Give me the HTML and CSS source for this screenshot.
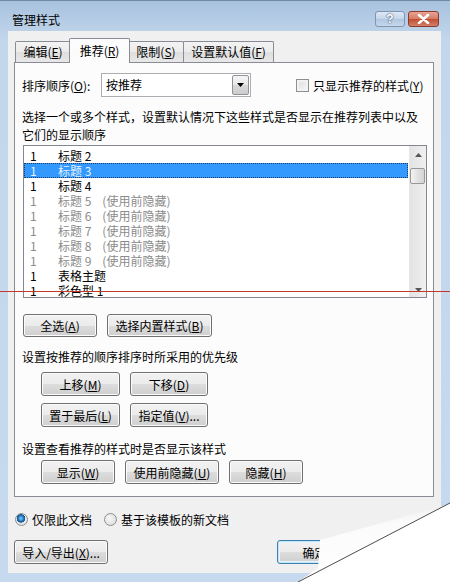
FILE: index.html
```html
<!DOCTYPE html>
<html lang="zh-CN">
<head>
  <meta charset="UTF-8" />
  <title>管理样式</title>
  <link rel="stylesheet" href="styles.css">
</head>
<body>
  <div class="window">
    <div class="titlebar">
      <span class="title">管理样式</span>
      <div class="caption-btn help">?</div>
      <div class="caption-btn close">
        <svg width="13" height="10" viewBox="0 0 13 10">
          <path d="M2 1 L11 9 M11 1 L2 9" stroke="#fff" stroke-width="2.6" stroke-linecap="round" />
        </svg>
      </div>
    </div>

    <div class="client">
      <div class="tabs">
        <div class="tab t1">编辑(<u>E</u>)</div>
        <div class="tab active">推荐(<u>R</u>)</div>
        <div class="tab t3">限制(<u>S</u>)</div>
        <div class="tab t4">设置默认值(<u>F</u>)</div>
      </div>

      <div class="panel">
        <div class="sort-row">
          <span class="sort-label">排序顺序(<u>O</u>):</span>
          <div class="combo">
            <span class="combo-text">按推荐</span>
            <span class="combo-btn">
              <svg width="7" height="4" viewBox="0 0 7 4"><path d="M0 0 H7 L3.5 4 Z" fill="#000" /></svg>
            </span>
          </div>
          <span class="checkbox"></span>
          <span class="check-label">只显示推荐的样式(<u>Y</u>)</span>
        </div>

        <p class="hint">选择一个或多个样式，设置默认情况下这些样式是否显示在推荐列表中以及<br>它们的显示顺序</p>

        <div class="listbox">
          <div class="rows">
            <div class="row"><span class="num">1</span>标题 2</div>
            <div class="row selected"><span class="num">1</span>标题 3</div>
            <div class="row"><span class="num">1</span>标题 4</div>
            <div class="row hidden"><span class="num">1</span>标题 5<span class="note">(使用前隐藏)</span></div>
            <div class="row hidden"><span class="num">1</span>标题 6<span class="note">(使用前隐藏)</span></div>
            <div class="row hidden"><span class="num">1</span>标题 7<span class="note">(使用前隐藏)</span></div>
            <div class="row hidden"><span class="num">1</span>标题 8<span class="note">(使用前隐藏)</span></div>
            <div class="row hidden"><span class="num">1</span>标题 9<span class="note">(使用前隐藏)</span></div>
            <div class="row"><span class="num">1</span>表格主题</div>
            <div class="row"><span class="num">1</span>彩色型 1</div>
          </div>
          <div class="scrollbar">
            <svg class="arrow" width="7" height="4" viewBox="0 0 7 4"><path d="M0 4 H7 L3.5 0 Z" fill="#555" /></svg>
            <div class="thumb"></div>
            <svg class="arrow down" width="7" height="4" viewBox="0 0 7 4"><path d="M0 0 H7 L3.5 4 Z" fill="#555" /></svg>
          </div>
        </div>

        <div class="btn-row first">
          <button class="btn w74">全选(<u>A</u>)</button>
          <button class="btn w105">选择内置样式(<u>B</u>)</button>
        </div>

        <p class="section">设置按推荐的顺序排序时所采用的优先级</p>
        <div class="btn-grid">
          <button class="btn tall w79">上移(<u>M</u>)</button>
          <button class="btn tall w78">下移(<u>D</u>)</button>
          <button class="btn tall w79">置于最后(<u>L</u>)</button>
          <button class="btn tall w78">指定值(<u>V</u>)...</button>
        </div>

        <p class="section second">设置查看推荐的样式时是否显示该样式</p>
        <div class="btn-row indent">
          <button class="btn tall w74">显示(<u>W</u>)</button>
          <button class="btn tall w94">使用前隐藏(<u>U</u>)</button>
          <button class="btn tall w74">隐藏(<u>H</u>)</button>
        </div>
      </div>

      <div class="radio-row">
        <span class="radio checked"></span>
        <span class="radio-label">仅限此文档</span>
        <span class="radio"></span>
        <span class="radio-label">基于该模板的新文档</span>
      </div>

      <div class="footer">
        <button class="btn tall w94">导入/导出(<u>X</u>)...</button>
        <button class="btn tall w75 default ok">确定</button>
        <button class="btn tall w75">取消</button>
      </div>
    </div>

    <div class="redline"></div>

    <svg class="curl" width="160" height="92" viewBox="0 0 160 92">
      <defs>
        <linearGradient id="flap" x1="0" y1="0" x2="0.15" y2="1">
          <stop offset="0" stop-color="#e6e6e6" />
          <stop offset="0.35" stop-color="#fbfbfb" />
          <stop offset="1" stop-color="#ffffff" />
        </linearGradient>
      </defs>
      <path d="M160 13 L160 92 L8 92 Z" fill="#fff" />
      <path d="M156 15 L30 50 L28 78 L8 92 L160 13 Z" fill="url(#flap)" />
      <path d="M8 92 L160 13" stroke="#4d4d4d" stroke-width="1" />
    </svg>
  </div>
</body>
</html>
```

FILE: styles.css
```css
* {
  box-sizing: border-box;
}

body {
  margin: 0;
  background: #fff;
  font-family: "Noto Sans CJK SC", "Liberation Sans", sans-serif;
  font-size: 12px;
  color: #000;
}

u {
  text-decoration: underline;
  text-underline-offset: 1px;
}

.window {
  position: relative;
  width: 450px;
  height: 582px;
  overflow: hidden;
  background: linear-gradient(#a8c2de, #c3d7ec 40px, #c6d9ee);
  border-top: 1px solid #6f8aa8;
}

.titlebar {
  display: flex;
  align-items: flex-start;
  height: 30px;
  padding: 10px 11px 0 12px;
}

.title {
  margin-top: 1px;
  line-height: 16px;
  font-size: 12px;
}

.caption-btn {
  display: flex;
  align-items: center;
  justify-content: center;
  height: 16px;
  border-radius: 3px;
}

.help {
  width: 30px;
  margin-left: auto;
  margin-right: 3px;
  border: 1px solid #7d94b2;
  background: linear-gradient(#dfe9f5, #c4d5ea 50%, #afc5e0 50%, #c7d8ec);
  color: #fff;
  font-weight: bold;
  font-size: 12px;
  font-family: "Liberation Sans", sans-serif;
  text-shadow: 0 0 2px #3b5573, 0 0 1px #3b5573;
}

.close {
  width: 31px;
  border: 1px solid #8c3a2e;
  background: linear-gradient(#e8a493, #d47a64 50%, #c24a30 50%, #d2806a);
}

.client {
  height: 542px;
  margin: 0 9px 0 8px;
  background: #f0f0f0;
  padding-top: 7px;
}

.tabs {
  display: flex;
  align-items: flex-end;
  height: 24px;
  padding-left: 7px;
}

.tab {
  height: 21px;
  margin-left: -1px;
  padding: 0;
  line-height: 20px;
  text-align: center;
  white-space: nowrap;
  border: 1px solid #898c95;
  border-bottom: none;
  background: linear-gradient(#f3f3f3, #ebebeb 50%, #dedede 50%, #e8e8e8);
  border-radius: 2px 2px 0 0;
}

.t1 {
  margin-left: 0;
  width: 56px;
}

.t3 {
  width: 56px;
}

.t4 {
  width: 91px;
}

.tab.active {
  position: relative;
  z-index: 1;
  height: 25px;
  width: 61px;
  margin-left: -2px;
  margin-right: -1px;
  margin-bottom: -1px;
  padding-top: 1px;
  background: #fcfcfc;
  line-height: 22px;
}

.panel {
  width: 420px;
  height: 435px;
  margin-left: 6px;
  padding-left: 7px;
  border: 1px solid #898c95;
  background: #fcfcfc;
}

.sort-row {
  display: flex;
  align-items: center;
  height: 24px;
  margin-top: 10px;
}

.sort-label {
  width: 79px;
}

.combo {
  display: flex;
  width: 150px;
  height: 24px;
  border: 1px solid #abadb3;
  background: #fff;
}

.combo-text {
  flex: 1;
  padding-left: 4px;
  line-height: 22px;
}

.combo-btn {
  display: flex;
  align-items: center;
  justify-content: center;
  width: 17px;
  margin: 1px;
  border: 1px solid #8f9296;
  border-radius: 2px;
  background: linear-gradient(#f4f4f4, #e9e9e9 50%, #d9d9d9 50%, #cdcdcd);
}

.checkbox {
  width: 13px;
  height: 13px;
  margin-left: 45px;
  border: 1px solid #8e8f8f;
  background: linear-gradient(135deg, #dcdcdc, #f8f8f8);
  box-shadow: inset 0 0 0 2px #f2f2f2;
}

.check-label {
  margin-left: 4px;
}

.hint {
  margin: 11px 0 0;
  line-height: 18px;
}

.listbox {
  display: flex;
  width: 404px;
  height: 153px;
  margin: 1px 0 0 1px;
  border: 1px solid #828790;
  background: #fff;
  overflow: hidden;
}

.rows {
  width: 384px;
  padding-top: 2px;
}

.row {
  height: 15px;
  line-height: 15px;
  white-space: nowrap;
}

.num {
  display: inline-block;
  width: 34px;
  padding-left: 6px;
}

.note {
  margin-left: 11px;
}

.row.hidden {
  color: #8b8b8b;
}

.row.selected {
  background: #3399ff;
  color: #e6f1fd;
  outline: 1px dotted #1d3c66;
  outline-offset: -1px;
}

.scrollbar {
  position: relative;
  width: 17px;
  margin-left: 1px;
  background: linear-gradient(90deg, #e3e3e3, #f0f0f0);
  border-left: 1px solid #e6e6e6;
}

.arrow {
  display: block;
  margin: 7px auto 0;
}

.arrow.down {
  position: absolute;
  left: 5px;
  bottom: 5px;
  margin: 0;
}

.thumb {
  width: 15px;
  height: 16px;
  margin: 11px 0 0 0;
  border: 1px solid #979797;
  border-radius: 2px;
  background: linear-gradient(90deg, #f3f3f3, #e2e2e2 50%, #d4d4d4);
}

.btn {
  display: inline-flex;
  align-items: center;
  justify-content: center;
  height: 23px;
  padding: 0;
  border: 1px solid #707070;
  border-radius: 3px;
  background: linear-gradient(#f2f2f2, #ebebeb 50%, #dddddd 50%, #cfcfcf);
  box-shadow: inset 0 0 0 1px #fbfbfb;
  font: inherit;
  color: #000;
}

.btn.tall {
  height: 24px;
}

.w74 { width: 74px; }
.w75 { width: 75px; }
.w78 { width: 78px; }
.w79 { width: 79px; }
.w94 { width: 94px; }
.w105 { width: 105px; }

.btn-row {
  display: flex;
  gap: 10px;
}

.btn-row.first {
  margin: 16px 0 0 1px;
}

.btn-row.indent {
  margin: 2px 0 0 19px;
}

.section {
  margin: 11px 0 0;
  line-height: 18px;
}

.section.second {
  margin-top: 13px;
}

.btn-grid {
  display: grid;
  grid-template-columns: 79px 78px;
  gap: 7px 10px;
  margin: 6px 0 0 19px;
}

.radio-row {
  display: flex;
  align-items: center;
  height: 16px;
  margin: 14px 0 0 7px;
}

.radio {
  width: 13px;
  height: 13px;
  border-radius: 50%;
  border: 1px solid #8e8f8f;
  background: radial-gradient(circle at 40% 40%, #f6f6f6, #d8d8d8);
}

.radio.checked {
  background: radial-gradient(circle at 45% 40%, #7fd0ff 0, #1f70b5 3px, #144f8a 4px, #eaeaea 4.5px, #dcdcdc 100%);
}

.radio-label {
  margin: 0 12px 0 4px;
}

.footer {
  display: flex;
  margin: 13px 0 0 6px;
}

.ok {
  margin-left: 169px;
  margin-right: 10px;
}

.btn.default {
  border-color: #3c7fb1;
  box-shadow: inset 0 0 0 1px #c4e5f6, inset 0 0 0 2px #e8f4fb;
}

.redline {
  position: absolute;
  left: 0;
  top: 290px;
  width: 450px;
  height: 1px;
  background: #c0392b;
}

.curl {
  position: absolute;
  right: 0;
  bottom: 0;
}
```
